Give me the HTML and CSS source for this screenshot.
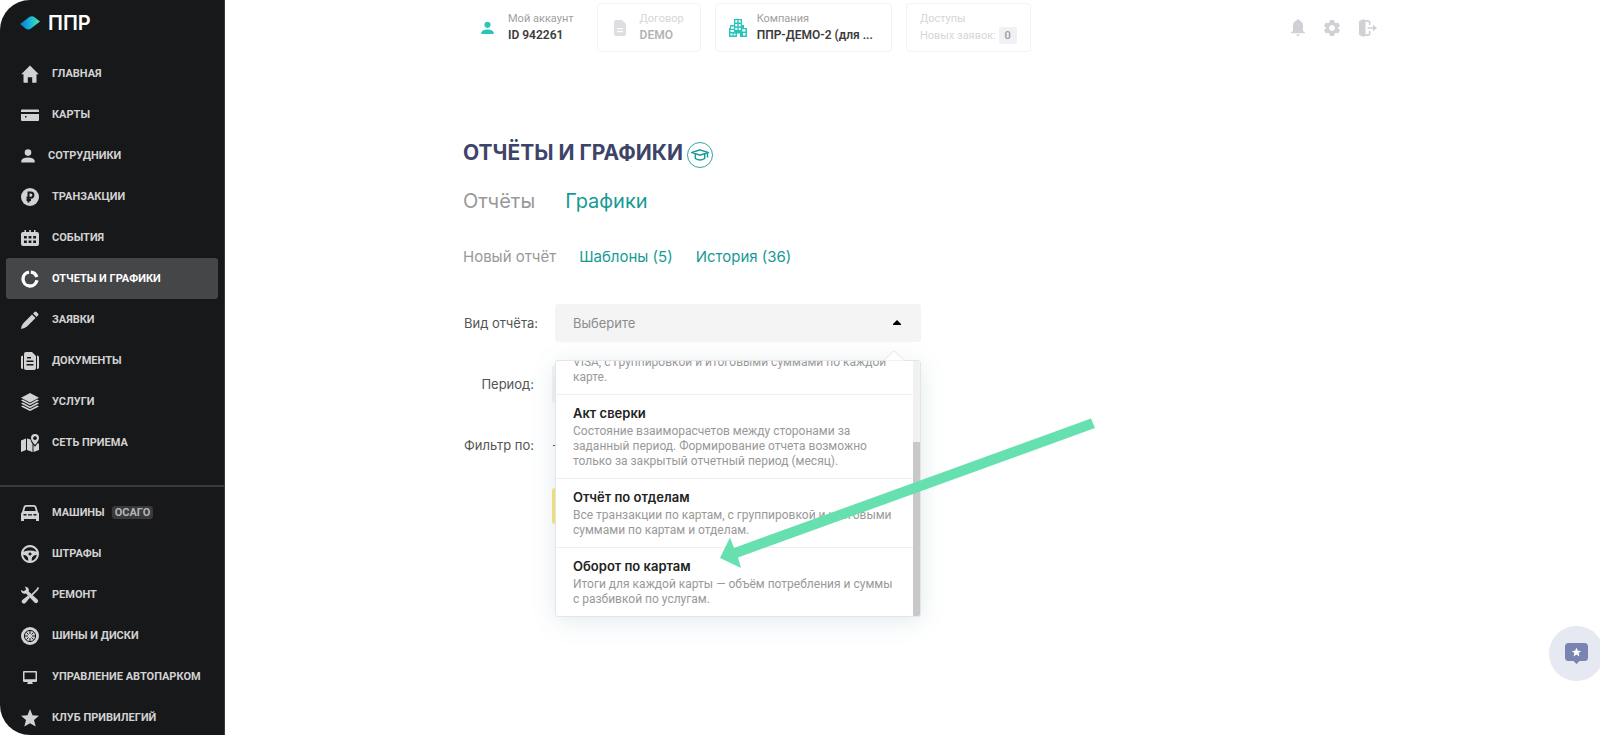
FILE: index.html
```html
<!DOCTYPE html>
<html lang="ru">
<head>
    <meta charset="UTF-8">
    <meta name="viewport" content="width=device-width, initial-scale=1.0">
    <link rel="stylesheet" href="styles.css">
    <title>Отчёты и графики</title>
</head>
<body>
    <aside class="sidebar">
        <a class="logo" href="#">
            <svg width="20" height="14" viewBox="0 0 20 14">
                <defs>
                    <linearGradient id="logoFill" x1="0" x2="1" y1="0" y2="0">
                        <stop offset="0" stop-color="#1272c4"/>
                        <stop offset=".5" stop-color="#18b4dc"/>
                        <stop offset="1" stop-color="#4fe3a8"/>
                    </linearGradient>
                </defs>
                <path fill="url(#logoFill)" d="M0 8 9 1.2q3-1.8 5.500 0L20 5.500 11 12.500q-3 1.800-5.500 0z"/>
            </svg>
            <span>ППР</span>
        </a>
        <nav class="menu">
            <a class="menu-item" href="#">
                <svg class="icon" viewBox="0 0 18 18"><path d="M9 .5 17.800 9.300h-2.300V17q0 .8-.8.8h-3.500v-5.600H6.800v5.600H3.300q-.8 0-.8-.8V9.300H.2z"/></svg>
                <span>ГЛАВНАЯ</span>
            </a>
            <a class="menu-item" href="#">
                <svg class="icon" viewBox="0 0 18 18"><path fill-rule="evenodd" d="M1 3.500h16q1 0 1 1V6H0V4.500q0-1 1-1zM0 8h18v6q0 1-1 1H1q-1 0-1-1zm4 2v1.600h1.500V10z"/></svg>
                <span>КАРТЫ</span>
            </a>
            <a class="menu-item menu-item--narrow" href="#">
                <svg class="icon" viewBox="0 0 14 18"><circle cx="7" cy="5.600" r="3.300"/><path d="M.3 15.500v-1.700Q1.500 10.500 7 10.500t6.700 3.300v1.700z"/></svg>
                <span>СОТРУДНИКИ</span>
            </a>
            <a class="menu-item" href="#">
                <svg class="icon" viewBox="0 0 18 18"><circle cx="9" cy="9" r="9"/><path class="cut" d="M7.500 14.500V4.500h2.300a2.500 2.500 0 0 1 0 5.200H5.500M5.500 12h4.500"/></svg>
                <span>ТРАНЗАКЦИИ</span>
            </a>
            <a class="menu-item" href="#">
                <svg class="icon" viewBox="0 0 18 18"><path fill-rule="evenodd" d="M3.500 1h1.500v2h3.200V1h1.600v2H13V1h1.500v2H16q2 0 2 2v10q0 2-2 2H2q-2 0-2-2V5q0-2 2-2h1.500zM3 7v2.500h2.800V7zm4.600 0v2.500h2.800V7zm4.600 0v2.500H15V7zM3 11.500V14h2.800v-2.500zm4.600 0V14h2.800v-2.500zm4.600 0V14H15v-2.500z"/></svg>
                <span>СОБЫТИЯ</span>
            </a>
            <a class="menu-item menu-item--active" href="#">
                <svg class="icon" viewBox="0 0 18 18"><path class="ring" d="M9.800 2.100a7 7 0 0 1 6 5M15.900 10.200A7 7 0 1 1 8 2.100"/></svg>
                <span>ОТЧЕТЫ И ГРАФИКИ</span>
            </a>
            <a class="menu-item" href="#">
                <svg class="icon" viewBox="0 0 18 18"><path d="M11 3.500 14.500 7 6 15.500Q4 17.200 0 18q.6-4 2.500-6zM12 2.500 13.500 1q1-1 2 0L17 2.500q1 1 0 2L15.500 6z"/></svg>
                <span>ЗАЯВКИ</span>
            </a>
            <a class="menu-item" href="#">
                <svg class="icon" viewBox="0 0 18 18"><path fill-rule="evenodd" d="M5 0h6l4 4v12q0 2-2 2H5q-2 0-2-2V2q0-2 2-2zm1 5v1.500h4V5zM5.500 8.500V10h7V8.500zm0 3.500v1.500h7V12z"/><path d="M0 5q0-1.500 2-1.500V17Q0 17 0 15.500zM16 3.500q2 0 2 1.500v10.500q0 1.500-2 1.500z"/></svg>
                <span>ДОКУМЕНТЫ</span>
            </a>
            <a class="menu-item" href="#">
                <svg class="icon" viewBox="0 0 18 18"><path d="M9 0 18 4.700 9 9.400 0 4.700zM0 7.500l1.800-.9L9 10.400l7.200-3.800 1.800.9-9 4.700zM0 10.500l1.800-.9L9 13.400l7.200-3.800 1.800.9-9 4.700zM0 13.500l1.800-.9L9 16.300l7.200-3.700 1.800.9L9 18z"/></svg>
                <span>УСЛУГИ</span>
            </a>
            <a class="menu-item" href="#">
                <svg class="icon" viewBox="0 0 18 18"><path d="M0 6.500 5 4.500V16L0 18zM6 4.500l3.500 1Q10 8 11.500 10v8L6 16zM12.500 11l1.500 1.800L17 9l1 1v6l-5.500 2z"/><path fill-rule="evenodd" d="M14 0a4 4 0 0 1 4 4q0 2.500-4 7-4-4.500-4-7a4 4 0 0 1 4-4zm0 2.200a1.900 1.900 0 1 0 .01 0z"/></svg>
                <span>СЕТЬ ПРИЕМА</span>
            </a>
        </nav>
        <nav class="menu menu--extra">
            <a class="menu-item" href="#">
                <svg class="icon" viewBox="0 0 18 18"><path fill-rule="evenodd" d="M5 1h8q1.800 0 2.300 1.500L17 8q1 .8 1 2v7h-3v-2H3v2H0v-7q0-1.200 1-2l1.700-5.500Q3.200 1 5 1zm0 1.800Q4.500 2.800 4.300 3.500L3.200 7h11.600l-1.100-3.500q-.2-.7-.7-.7zM2.500 10v1.500h3V10zm4.500.2v1.300h4v-1.300zm5.500-.2v1.500h3V10z"/></svg>
                <span>МАШИНЫ</span>
                <span class="badge">ОСАГО</span>
            </a>
            <a class="menu-item" href="#">
                <svg class="icon" viewBox="0 0 18 18"><path fill-rule="evenodd" d="M9 0a9 9 0 1 1-.01 0zM9 2.200a7 7 0 0 0-6.500 4.600Q9 4.300 15.500 6.800A7 7 0 0 0 9 2.200zM2.200 9.800A7 7 0 0 0 7.300 15.800L7 12.500Q5.500 10 2.200 9.800zM15.800 9.800Q12.500 10 11 12.500l-.3 3.300a7 7 0 0 0 5.100-6zM9 7.500a1.500 1.500 0 1 0 .01 0z"/></svg>
                <span>ШТРАФЫ</span>
            </a>
            <a class="menu-item" href="#">
                <svg class="icon" viewBox="0 0 18 18"><path d="M3.500.8Q7 .3 7.800 3.500q.3 1-.1 2l8.800 8q1.500 1.500 0 3t-3 0L5 7.500Q1.500 8.500.2 5.500L0 4l2.500 1.300L4.800 4V2z"/><path d="M17 .8 18 2l-1.500 2.500-5 5-1.200-1.300 5-5zM7 9.500 9 11.500l-4.500 5.500q-1.500 1.200-3.200 0-1.200-1.700 0-3z"/></svg>
                <span>РЕМОНТ</span>
            </a>
            <a class="menu-item" href="#">
                <svg class="icon" viewBox="0 0 18 18"><circle cx="9" cy="9" r="9"/><circle class="cut cut--thin" cx="9" cy="9" r="5.600"/><path class="cut cut--thin" d="M9 4v3M9 11v3M4 9h3M11 9h3M5.500 5.500l2 2M10.500 10.500l2 2M12.500 5.500l-2 2M5.500 12.500l2-2"/></svg>
                <span>ШИНЫ И ДИСКИ</span>
            </a>
            <a class="menu-item" href="#">
                <svg class="icon" viewBox="0 0 18 18"><path fill-rule="evenodd" d="M3 3h12q1 0 1 1v9q0 1-1 1h-4l1 2H6l1-2H3q-1 0-1-1V4q0-1 1-1zm.5 1.500v6.800h11V4.500z"/></svg>
                <span>УПРАВЛЕНИЕ АВТОПАРКОМ</span>
            </a>
            <a class="menu-item" href="#">
                <svg class="icon" viewBox="0 0 18 18"><path d="m9 0 2.500 6.200 6.500.5-5 4.200 1.700 6.700L9 14.200l-5.700 3.400L5 10.900 0 6.700l6.500-.5z"/></svg>
                <span>КЛУБ ПРИВИЛЕГИЙ</span>
            </a>
        </nav>
    </aside>

    <div class="page">
        <header class="topbar">
            <div class="card card--plain">
                <svg class="card-icon card-icon--teal" width="13" height="18" viewBox="0 0 14 18"><circle cx="7" cy="5.600" r="3.300"/><path d="M.3 15.500v-1.700Q1.500 10.500 7 10.500t6.700 3.300v1.700z"/></svg>
                <div class="card-text">
                    <span class="card-label">Мой аккаунт</span>
                    <strong>ID 942261</strong>
                </div>
            </div>
            <div class="card card--contract">
                <svg class="card-icon" width="12" height="16" viewBox="0 0 12 16"><path fill-rule="evenodd" d="M2 0h6l4 4v10q0 2-2 2H2q-2 0-2-2V2q0-2 2-2zm1 8v1.300h6V8zm0 3v1.300h6V11z"/></svg>
                <div class="card-text">
                    <span class="card-label">Договор</span>
                    <strong>DEMO</strong>
                </div>
            </div>
            <div class="card card--company">
                <svg class="card-icon card-icon--teal" width="18" height="18" viewBox="0 0 18 18"><path fill-rule="evenodd" d="M5 0h8v6h2v3h3v9h-7v-3.500H8V18H0V9h1V6h4zm1.300 1.300v2.200h2V1.300zm3.400 0v2.200h2V1.300zM6.300 5v2.200h2V5zm3.400 0v2.200h2V5zM2 7.500v2.200h2.800V7.500zm4.300 1.200v2.200h2V8.700zm3.400 0v2.200h2V8.700zM1.500 11v2h3.300v-2zm11.700-.8v2.200h3.300v-2.200zM1.500 14.500v2h2v-2zm3.200 0v2h1.800v-2zM14 14v2.500h2.500V14z"/></svg>
                <div class="card-text">
                    <span class="card-label">Компания</span>
                    <strong>ППР-ДЕМО-2 (для ...</strong>
                </div>
            </div>
            <div class="card card--access">
                <div class="card-text">
                    <span class="card-label">Доступы</span>
                    <span class="requests">Новых заявок: <b class="count">0</b></span>
                </div>
            </div>
            <div class="tools">
                <button class="tool" type="button" aria-label="Уведомления">
                    <svg width="14" height="18" viewBox="0 0 14 18"><path d="M7 0q1.300 0 1.300 1.500Q12 2.500 12 6.500V12l2 1.500v.8H0v-.8L2 12V6.500q0-4 3.700-5Q5.700 0 7 0zM5.300 15.500h3.400Q8.500 17.300 7 17.300t-1.700-1.800z"/></svg>
                </button>
                <button class="tool" type="button" aria-label="Настройки">
                    <svg width="16" height="18" viewBox="0 0 16 18"><path fill-rule="evenodd" d="M6 1h4l.5 2.300 1.500.9 2.200-.8 1.800 3.300L14.300 8.200v1.600L16 11.300l-1.800 3.300-2.200-.8-1.500.9L10 17H6l-.5-2.300-1.500-.9-2.200.8L0 11.300l1.700-1.500V8.200L0 6.700l1.800-3.300 2.200.8 1.500-.9zM8 6a3 3 0 1 0 .01 0z"/></svg>
                </button>
                <button class="tool" type="button" aria-label="Выход">
                    <svg width="18" height="18" viewBox="0 0 18 18"><path fill-rule="evenodd" d="M5 0v18l-5-2V2zM5 1h4q2.500 0 2.500 2.500V6H9.800V4q0-1.300-1.300-1.300H6.500v12.600h2q1.300 0 1.300-1.300v-2h1.700v2.500Q11.500 17 9 17H5zM8.500 8.200H14V5.700L18 9l-4 3.300V9.800H8.500z"/></svg>
                </button>
            </div>
        </header>

        <main class="content">
            <div class="title">
                <h1>ОТЧЁТЫ И ГРАФИКИ</h1>
                <button class="help" type="button" aria-label="Обучение">
                    <svg width="18" height="14" viewBox="0 0 18 14"><path d="M9 1.800 17 4.500 9 7.200 1 4.500zM4.300 6v4.500Q9 13.500 13.700 10.500V6M16.500 5v4.500"/></svg>
                </button>
            </div>
            <nav class="tabs">
                <a class="current" href="#">Отчёты</a>
                <a href="#">Графики</a>
            </nav>
            <nav class="subtabs">
                <a class="current" href="#">Новый отчёт</a>
                <a href="#">Шаблоны (5)</a>
                <a href="#">История (36)</a>
            </nav>

            <form class="report-form">
                <div class="form-row form-row--type">
                    <label for="reportType">Вид отчёта:</label>
                    <div class="dropdown">
                        <select id="reportType">
                            <option>Выберите</option>
                        </select>
                        <svg class="caret" width="8" height="5" viewBox="0 0 8 5"><path d="M4 0 8 4v1H0V4z"/></svg>
                        <div class="options">
                            <ul class="options-list">
                                <li>
                                    <button class="option" type="button">
                                        <span class="option-text">VISA, с группировкой и итоговыми суммами по каждой карте.</span>
                                    </button>
                                </li>
                                <li>
                                    <button class="option" type="button">
                                        <span class="option-title">Акт сверки</span>
                                        <span class="option-text">Состояние взаиморасчетов между сторонами за заданный период. Формирование отчета возможно только за закрытый отчетный период (месяц).</span>
                                    </button>
                                </li>
                                <li>
                                    <button class="option" type="button">
                                        <span class="option-title">Отчёт по отделам</span>
                                        <span class="option-text">Все транзакции по картам, с группировкой и итоговыми суммами по картам и отделам.</span>
                                    </button>
                                </li>
                                <li>
                                    <button class="option" type="button">
                                        <span class="option-title">Оборот по картам</span>
                                        <span class="option-text">Итоги для каждой карты — объём потребления и суммы с разбивкой по услугам.</span>
                                    </button>
                                </li>
                            </ul>
                            <div class="scrollbar"><div class="scrollbar-thumb"></div></div>
                        </div>
                        <svg class="notch" width="20" height="11" viewBox="0 0 20 11"><path d="M0 10.500 10 .7l10 9.800"/></svg>
                        <svg class="arrow" width="376" height="152" viewBox="0 0 376 152"><path d="M0 142 10 121.500 14 132 371 2.500 375 12 18 141.500 21 152z"/></svg>
                    </div>
                </div>
                <div class="form-row">
                    <label for="period">Период:</label>
                    <input id="period" type="text">
                </div>
                <div class="form-row">
                    <span class="row-label">Фильтр по:</span>
                    <span>-</span>
                </div>
                <div class="form-row">
                    <span class="row-label"></span>
                    <button class="submit" type="submit" aria-label="Сформировать"></button>
                </div>
            </form>
        </main>
    </div>

    <button class="chat" type="button" aria-label="Отзыв">
        <svg width="23" height="21" viewBox="0 0 23 21"><path fill="#7984b0" d="M3.500 0h16Q23 0 23 3.500v11q0 3.500-3.500 3.500h-5l-3 3-3-3h-5Q0 18 0 14.500v-11Q0 0 3.500 0z"/><path fill="#fff" d="m11.500 4.500 1.300 3.200 3.400.2-2.600 2.200.8 3.400-2.900-1.900-2.900 1.900.8-3.400-2.600-2.200 3.400-.2z"/></svg>
    </button>
</body>
</html>
```
FILE: styles.css
```css
* {
    box-sizing: border-box;
}
body {
    margin: 0;
    display: flex;
    min-height: 100vh;
    background-color: #fff;
    color: #555;
    font-family: Inter, Roboto, sans-serif;
    font-size: 13px;
    overflow: hidden;
}
a {
    text-decoration: none;
}
button {
    padding: 0;
    border: none;
    background: none;
    font-family: inherit;
    cursor: pointer;
}

/* sidebar */
.sidebar {
    width: 225px;
    height: 100vh;
    flex-shrink: 0;
    overflow: hidden;
    background-color: #17181a;
    border-right: 1px solid #39393b;
    border-radius: 30px 0 0 30px;
}
.logo {
    display: flex;
    align-items: center;
    gap: 8px;
    height: 46px;
    margin-bottom: 7px;
    padding-left: 20px;
    color: #fff;
    font-size: 20px;
    font-weight: 600;
}
.menu {
    padding: 0 6px;
}
.menu--extra {
    margin-top: 22px;
    padding-top: 5px;
    border-top: 2px solid #38393b;
}
.menu-item {
    display: flex;
    align-items: center;
    gap: 13px;
    height: 41px;
    padding-left: 15px;
    border-radius: 3px;
    color: #d2d2d2;
    font-family: Roboto, sans-serif;
    font-size: 11px;
    font-weight: 700;
}
.menu-item--narrow .icon {
    width: 14px;
}
.menu-item--active {
    background-color: #454648;
    color: #fff;
}
.icon {
    width: 18px;
    height: 18px;
    fill: currentColor;
}
.icon .ring {
    fill: none;
    stroke: currentColor;
    stroke-width: 3.4;
}
.icon .cut {
    fill: none;
    stroke: #17181a;
    stroke-width: 2;
}
.icon .cut--thin {
    stroke-width: 1;
}
.badge {
    margin-left: -6px;
    padding: 0 3px;
    border-radius: 3px;
    background-color: #39393b;
    color: #b4b4b4;
}

/* top bar */
.page {
    flex: 1;
    padding: 3px 223px 0 238px;
}
.topbar {
    display: flex;
    gap: 14px;
}
.card {
    display: flex;
    align-items: center;
    gap: 10px;
    height: 49px;
    padding: 0 13px;
    border: 1px solid #f3f3f4;
    border-radius: 4px;
    font-family: Roboto, sans-serif;
    white-space: nowrap;
}
.card--plain {
    padding: 0 8px 0 17px;
    border-color: transparent;
    gap: 14px;
}
.card--contract {
    gap: 14px;
    padding: 0 16px;
}
.card--company {
    padding-right: 18px;
}
.card-icon {
    fill: #dedee2;
}
.card-icon--teal {
    fill: #2bc4b8;
}
.card-text {
    display: flex;
    flex-direction: column;
    padding-bottom: 2px;
    color: #a0a0a0;
    font-size: 11px;
    line-height: 17px;
}
.card-text strong {
    color: #3c3c3c;
    font-size: 12px;
    font-weight: 600;
}
.card--contract .card-label,
.card--access .card-text {
    color: #d6d6da;
}
.card--contract strong {
    color: #b4b4b4;
}
.count {
    display: inline-block;
    padding: 0 6px;
    border-radius: 3px;
    background-color: #f0f1f5;
    color: #9a9a9a;
    font-weight: 500;
}
.tools {
    display: flex;
    align-items: center;
    gap: 19px;
    margin-left: auto;
}
.tool svg {
    display: block;
    fill: #d0d1d5;
}

/* content */
.title {
    display: flex;
    align-items: center;
    gap: 4px;
    margin-top: 86px;
}
h1 {
    margin: 0;
    color: #3d4468;
    font-size: 21px;
    font-weight: 700;
    line-height: 30px;
}
.help {
    display: flex;
    align-items: center;
    justify-content: center;
    width: 26px;
    height: 26px;
    margin-top: 4px;
    border: 1px solid #2fa8a4;
    border-radius: 50%;
}
.help svg {
    fill: none;
    stroke: #169a96;
    stroke-width: 1.400;
}
.tabs,
.subtabs {
    display: flex;
    gap: 30px;
    margin-top: 19px;
    font-size: 20px;
    line-height: 28px;
}
.subtabs {
    gap: 23px;
    margin-top: 30px;
    font-size: 15px;
    line-height: 24px;
}
.tabs a,
.subtabs a {
    color: #169a96;
}
.tabs .current,
.subtabs .current {
    color: #999;
}

/* form */
.report-form {
    display: flex;
    flex-direction: column;
    gap: 22px;
    margin-top: 34px;
    color: #555;
}
.form-row {
    display: flex;
    align-items: center;
    height: 39px;
}
.form-row label,
.row-label {
    width: 89px;
    padding-right: 18px;
    text-align: right;
    white-space: nowrap;
}
.form-row--type label {
    width: 92px;
    padding-right: 17px;
}
.form-row input {
    width: 340px;
    height: 38px;
    border: none;
    border-radius: 3px;
    background-color: #f4f4f4;
}
.submit {
    width: 180px;
    height: 36px;
    border-radius: 3px;
    background-color: #f8e77a;
}
.dropdown {
    position: relative;
    width: 366px;
}
.dropdown select {
    display: block;
    width: 100%;
    height: 38px;
    padding: 0 18px;
    border: none;
    border-radius: 3px;
    appearance: none;
    background-color: #f4f4f4;
    color: #8c8c8c;
    font-family: inherit;
    font-size: 13px;
}
.caret {
    position: absolute;
    top: 16px;
    right: 20px;
}
.options {
    position: absolute;
    top: 56px;
    left: 0;
    z-index: 1;
    display: flex;
    width: 100%;
    height: 257px;
    overflow: hidden;
    border: 1px solid #e3e5e6;
    border-radius: 3px;
    background-color: #fff;
    box-shadow: 0 4px 24px rgba(70, 120, 140, 0.15);
}
.options-list {
    display: flex;
    flex: 1;
    flex-direction: column;
    justify-content: flex-end;
    margin: 0;
    padding: 0;
    list-style: none;
}
.options-list li + li {
    border-top: 1px solid #efefef;
}
.option {
    display: flex;
    flex-direction: column;
    gap: 2px;
    width: 100%;
    padding: 9px 16px 9px 17px;
    text-align: left;
}
.option-title {
    color: #222;
    font-size: 13px;
    font-weight: 600;
    line-height: 18px;
}
.option-text {
    color: #999;
    font-family: Roboto, sans-serif;
    font-size: 12px;
    line-height: 15px;
}
.scrollbar {
    display: flex;
    flex-direction: column;
    justify-content: flex-end;
    width: 7px;
    background-color: #f1f1f1;
}
.scrollbar-thumb {
    height: 68%;
    background-color: #c8c8c8;
}
.notch {
    position: absolute;
    top: 46px;
    right: 17px;
    z-index: 2;
    fill: #fff;
    stroke: #e3e5e6;
}
.arrow {
    position: absolute;
    top: 112px;
    left: 165px;
    z-index: 3;
    fill: #65e0ae;
    pointer-events: none;
}

/* feedback button */
.chat {
    position: fixed;
    right: -4px;
    bottom: 54px;
    display: flex;
    align-items: center;
    justify-content: center;
    width: 55px;
    height: 55px;
    border-radius: 50%;
    background-color: #e6e8f2;
}
```
